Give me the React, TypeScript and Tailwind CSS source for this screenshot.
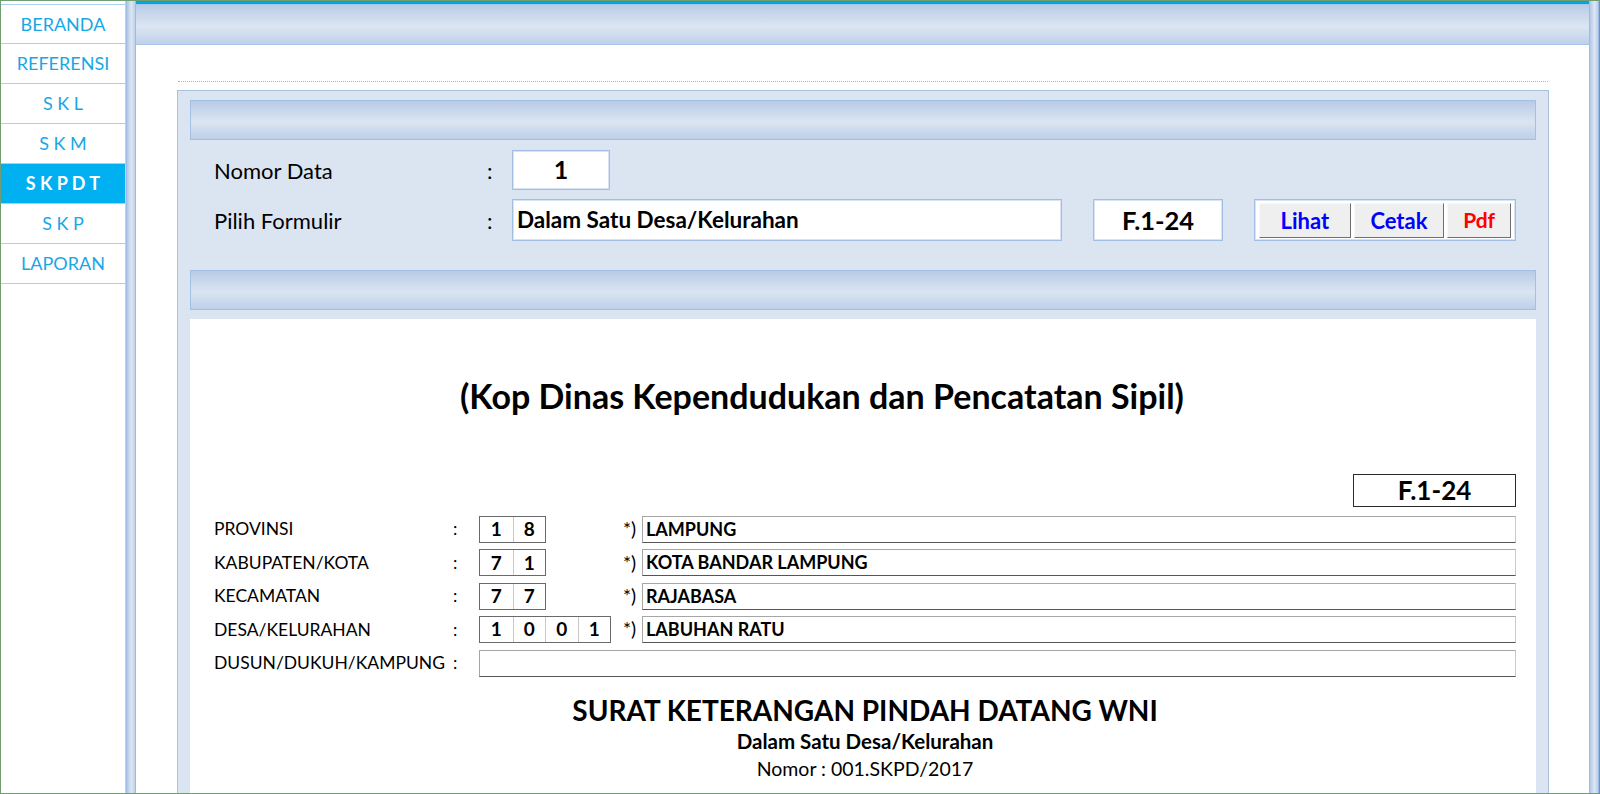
import React from 'react';

const menu = ['BERANDA', 'REFERENSI', 'S K L', 'S K M', 'S K P D T', 'S K P', 'LAPORAN'];

const wilayah = [
  { label: 'PROVINSI', kode: ['1', '8'], nama: 'LAMPUNG' },
  { label: 'KABUPATEN/KOTA', kode: ['7', '1'], nama: 'KOTA BANDAR LAMPUNG' },
  { label: 'KECAMATAN', kode: ['7', '7'], nama: 'RAJABASA' },
  { label: 'DESA/KELURAHAN', kode: ['1', '0', '0', '1'], nama: 'LABUHAN RATU' },
];

function GlossBar() {
  return (
    <div className="h-[40px] shrink-0 border border-[#a3bfe3] bg-[linear-gradient(to_bottom,#b8cbe6,#dbe5f2_55%,#bdcfe8)]" />
  );
}

function VBar() {
  return (
    <div className="w-[10px] shrink-0 border-x border-[#9dbbe4] bg-[linear-gradient(to_right,#b1c8e8,#dde7f3_55%,#bccfe9)]" />
  );
}

export default function App() {
  return (
    <div className="w-[1600px] h-[794px] border border-[#6f9e70] flex overflow-hidden bg-white font-['Lato',sans-serif] text-black">
      {/* sidebar */}
      <div className="w-[125px] shrink-0 pt-[3px] border-r border-[#b7d6f2]">
        {menu.map((m) => {
          const active = m === 'S K P D T';
          return (
            <div
              key={m}
              className={`h-[40px] flex items-center justify-center border-b border-[#a9d0f2] first:border-t text-[18px] ${
                active ? 'bg-[#00b0f0] text-white font-bold' : 'text-[#18a7e6]'
              }`}
            >
              {m}
            </div>
          );
        })}
      </div>

      <VBar />

      {/* main */}
      <div className="flex-1 flex flex-col min-w-0 overflow-hidden">
        <div className="h-[3px] shrink-0 bg-[#00a8df]" />
        <div className="h-[41px] shrink-0 border-y border-[#a9c6ea] bg-[linear-gradient(to_bottom,#b9cce7,#dce6f2_55%,#bfd0e9)]" />

        <div className="flex-1 min-h-0 pl-[41px] pr-[40px] pt-[36px]">
          <div className="border-t border-dotted border-[#b4b4b4] mx-[1px]" />

          <div className="mt-[8px] border border-[#aac0df] bg-[#dbe5f1] px-[12px] pt-[9px] h-[800px]">
            <GlossBar />

            {/* form */}
            <div className="pt-[10px] pb-[29px] pl-[24px] flex flex-col gap-[9px] text-[22px]">
              <div className="flex items-center h-[40px]">
                <span className="w-[273px]">Nomor Data</span>
                <span className="w-[25px]">:</span>
                <div className="w-[98px] h-[40px] bg-white border border-[#a3bde3] shadow-[inset_0_0_0_1px_#d6e3f4] flex items-center justify-center font-bold text-[25px]">
                  1
                </div>
              </div>
              <div className="flex items-center h-[42px]">
                <span className="w-[273px]">Pilih Formulir</span>
                <span className="w-[25px]">:</span>
                <div className="w-[550px] h-[42px] bg-white border border-[#a3bde3] shadow-[inset_0_0_0_1px_#d6e3f4] flex items-center pl-[4px] font-bold text-[22.5px]">
                  Dalam Satu Desa/Kelurahan
                </div>
                <div className="ml-[31px] w-[130px] h-[42px] bg-white border border-[#a3bde3] shadow-[inset_0_0_0_1px_#d6e3f4] flex items-center justify-center font-bold text-[25.5px]">
                  F.1-24
                </div>
                <div className="ml-[31px] w-[262px] h-[42px] bg-white border border-[#a3bde3] shadow-[inset_0_0_0_1px_#d6e3f4] flex items-center gap-[3px] px-[4px] font-bold text-[22px]">
                  <button className="w-[92px] h-[35px] bg-[#efefef] border border-[#f8f8f8] border-b-[#6f6f6f] border-r-[#6f6f6f] text-[#0000ff]">
                    Lihat
                  </button>
                  <button className="w-[91px] h-[35px] bg-[#efefef] border border-[#f8f8f8] border-b-[#6f6f6f] border-r-[#6f6f6f] text-[#0000ff]">
                    Cetak
                  </button>
                  <button className="w-[64px] h-[35px] bg-[#efefef] border border-[#f8f8f8] border-b-[#6f6f6f] border-r-[#6f6f6f] text-[#ff0000] text-[21px]">
                    Pdf
                  </button>
                </div>
              </div>
            </div>

            <GlossBar />

            {/* document */}
            <div className="mt-[9px] bg-white pl-[24px] pr-[20px] pt-[57px] h-[600px]">
              <div className="text-center font-bold text-[34px] leading-[40px] pr-[86px]">
                (Kop Dinas Kependudukan dan Pencatatan Sipil)
              </div>

              <div className="flex justify-end mt-[58px]">
                <div className="w-[163px] h-[33px] border-[1.5px] border-[#2a2a2a] flex items-center justify-center font-bold text-[26px]">
                  F.1-24
                </div>
              </div>

              <div className="mt-[9px] flex flex-col text-[17.5px]">
                {wilayah.map((w) => (
                  <div key={w.label} className="h-[33.4px] flex items-start">
                    <span className="w-[239px] h-[27px] flex items-center">{w.label}</span>
                    <span className="w-[26px] h-[27px] flex items-center">:</span>
                    <div className="w-[144px] flex">
                      <div className="flex border border-[#6a6a6a]">
                        {w.kode.map((k, i) => (
                          <div
                            key={i}
                            className="w-[32.5px] h-[25px] flex items-center justify-center font-bold text-[19px] border-l border-[#c8c8c8] first:border-l-0"
                          >
                            {k}
                          </div>
                        ))}
                      </div>
                    </div>
                    <span className="w-[19px] h-[27px] flex items-center text-[19px]">*)</span>
                    <div className="flex-1 h-[27px] border border-[#a6a6a6] border-b-[#555555] border-r-[#cacaca] flex items-center pl-[3px] font-bold text-[18px]">
                      {w.nama}
                    </div>
                  </div>
                ))}
                <div className="h-[33.4px] flex items-start">
                  <span className="w-[239px] h-[27px] flex items-center">DUSUN/DUKUH/KAMPUNG</span>
                  <span className="w-[26px] h-[27px] flex items-center">:</span>
                  <div className="flex-1 h-[27px] border border-[#a6a6a6] border-b-[#555555] border-r-[#cacaca]" />
                </div>
              </div>

              <div className="mt-[10px] text-center">
                <div className="font-bold text-[28px] leading-[34px]">SURAT KETERANGAN PINDAH DATANG WNI</div>
                <div className="font-bold text-[20.5px] leading-[28px]">Dalam Satu Desa/Kelurahan</div>
                <div className="text-[19.5px] leading-[28px]">Nomor : 001.SKPD/2017</div>
              </div>
            </div>
          </div>
        </div>
      </div>

      <VBar />
    </div>
  );
}
